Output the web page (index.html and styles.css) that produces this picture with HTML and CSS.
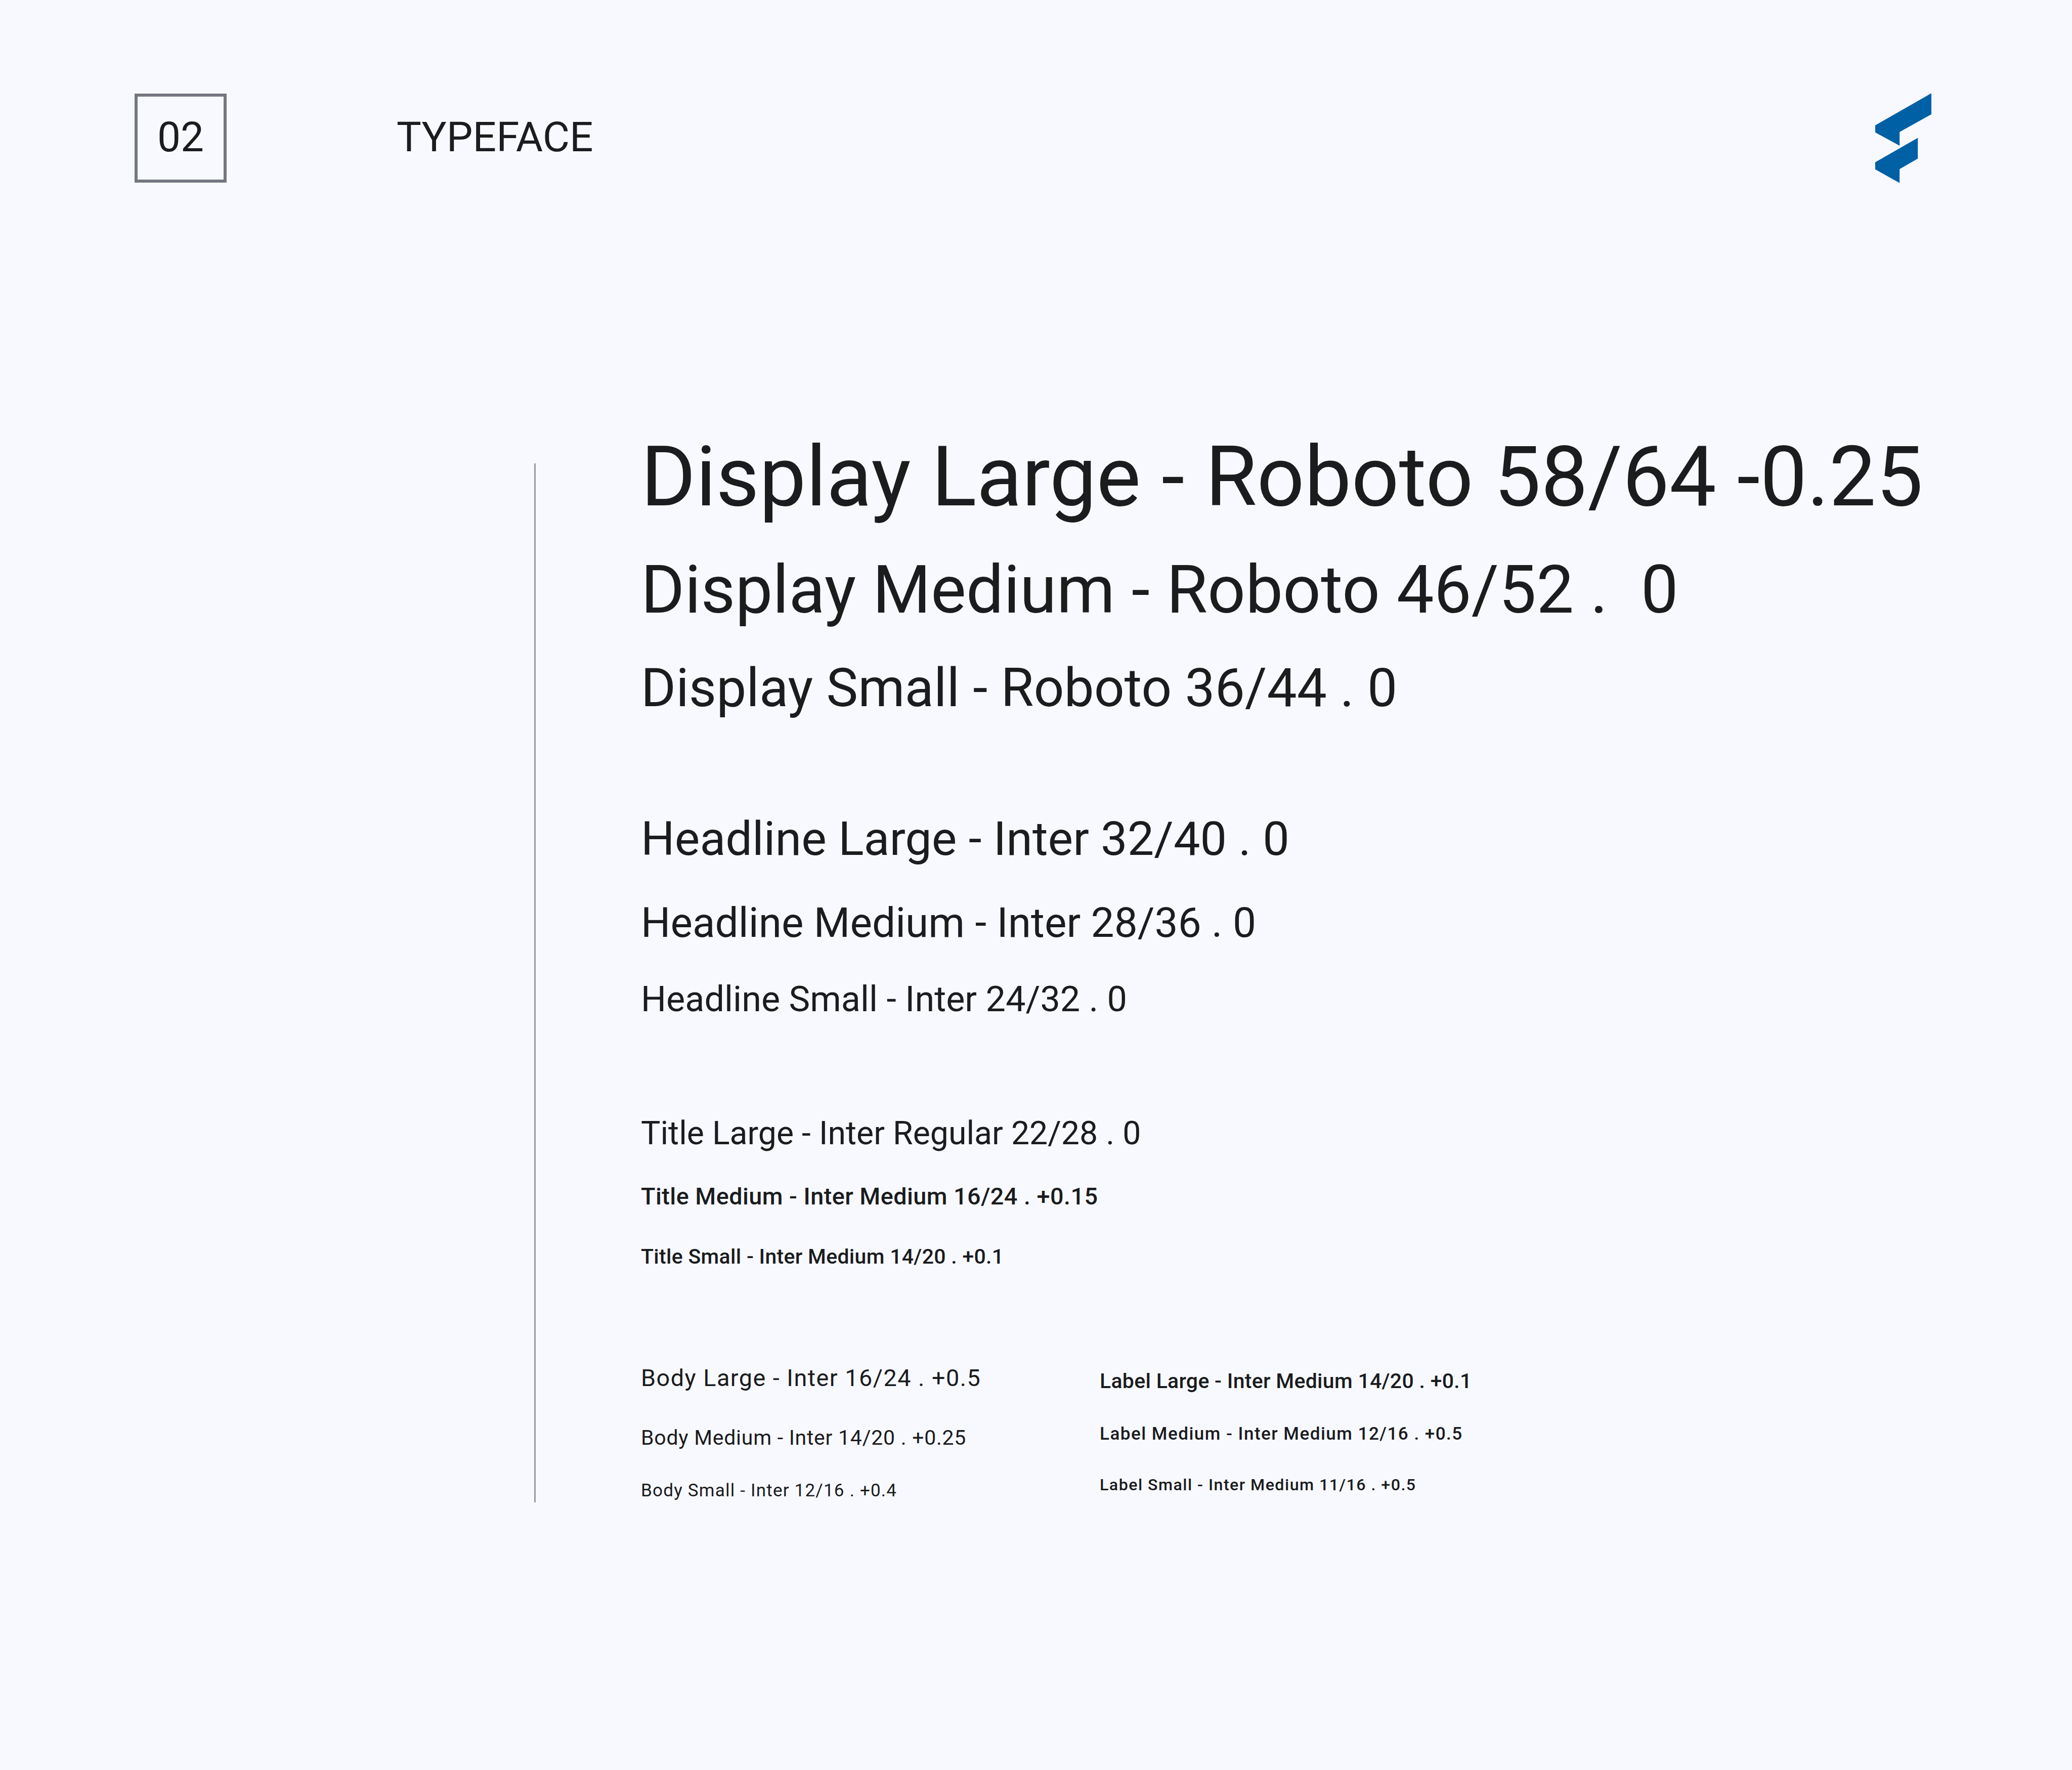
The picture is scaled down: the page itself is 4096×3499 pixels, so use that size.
FILE: index.html
```html
<!DOCTYPE html>
<html lang="en">
<head>
<meta charset="utf-8">
<title>Typeface</title>
<link rel="stylesheet" href="styles.css">
</head>
<body>
<div class="page">
  <header class="header">
    <div class="num">02</div>
    <div class="section">TYPEFACE</div>
    <svg class="logo" viewBox="204 96 456 729" aria-hidden="true">
      <polygon points="204,357 660,96 660,267 402,411 402,522 204,414"/>
      <polygon points="204,657 550,458 550,627 402,712 402,825 204,714"/>
    </svg>
  </header>
  <main class="main">
    <div class="rule"></div>
    <div class="samples">
      <div class="group g1">
        <p class="t dl">Display Large - Roboto 58/64 -0.25</p>
        <p class="t dm">Display Medium - Roboto 46/52 .&nbsp; 0</p>
        <p class="t ds">Display Small - Roboto 36/44 . 0</p>
      </div>
      <div class="group g2">
        <p class="t hl">Headline Large - Inter 32/40 . 0</p>
        <p class="t hm">Headline Medium - Inter 28/36 . 0</p>
        <p class="t hs">Headline Small - Inter 24/32 . 0</p>
      </div>
      <div class="group g3">
        <p class="t tl">Title Large - Inter Regular 22/28 . 0</p>
        <p class="t tm">Title Medium - Inter Medium 16/24 . +0.15</p>
        <p class="t ts">Title Small - Inter Medium 14/20 . +0.1</p>
      </div>
      <div class="cols">
        <div class="col body">
          <p class="t bl">Body Large - Inter 16/24 . +0.5</p>
          <p class="t bm">Body Medium - Inter 14/20 . +0.25</p>
          <p class="t bs">Body Small - Inter 12/16 . +0.4</p>
        </div>
        <div class="col label">
          <p class="t ll">Label Large - Inter Medium 14/20 . +0.1</p>
          <p class="t lm">Label Medium - Inter Medium 12/16 . +0.5</p>
          <p class="t lsm">Label Small - Inter Medium 11/16 . +0.5</p>
        </div>
      </div>
    </div>
  </main>
</div>
</body>
</html>
```

FILE: styles.css
```css
html, body {
  margin: 0;
  background: #f8f9ff;
}
body {
  font-family: Roboto, "Liberation Sans", sans-serif;
  color: #1a1c1e;
}
.page {
  width: 4096px;
  height: 3499px;
  padding: 184px 0 0 266px;
  box-sizing: border-box;
  overflow: hidden;
}
.header {
  display: flex;
  align-items: center;
  width: 3552px;
  height: 178px;
}
.num {
  width: 182px;
  height: 176px;
  box-sizing: border-box;
  border: 6px solid #74777f;
  padding-bottom: 4px;
  display: flex;
  align-items: center;
  justify-content: center;
  font-size: 82px;
}
.section {
  margin-left: 336px;
  padding-bottom: 4px;
  font-size: 82px;
  flex: 1;
}
.logo {
  width: 111px;
  height: 178px;
  fill: #0060a5;
}
.main {
  display: flex;
  margin-top: 554px;
  margin-left: 790px;
}
.rule {
  width: 3px;
  height: 2054px;
  background: #9a9ca2;
  margin-right: 208px;
}
.samples {
  margin-top: -64px;
}
.t {
  margin: 0;
  white-space: nowrap;
}
.dl { font-size: 165.2px; line-height: 182px; }
.dm { font-size: 131.7px; line-height: 148px; margin-top: 58px; }
.ds { font-size: 105.4px; line-height: 125px; margin-top: 58px; }
.g2 { margin-top: 178px; }
.hl { font-size: 93.6px; line-height: 114px; }
.hm { font-size: 82px; line-height: 102px; margin-top: 58px; }
.hs { font-size: 70.2px; line-height: 91px; margin-top: 55px; }
.g3 { margin-top: 179px; }
.tl { font-size: 64.4px; line-height: 80px; }
.tm { font-size: 46.8px; font-weight: 500; line-height: 68px; margin-top: 51px; letter-spacing: 0.44px; }
.ts { font-size: 41px; font-weight: 500; line-height: 57px; margin-top: 57px; letter-spacing: 0.29px; }
.cols {
  display: flex;
  margin-top: 177px;
}
.body { width: 907px; }
.bl { font-size: 46.8px; line-height: 68px; letter-spacing: 1.46px; }
.bm { font-size: 41px; line-height: 57px; margin-top: 56px; letter-spacing: 0.73px; }
.bs { font-size: 35.1px; line-height: 45px; margin-top: 53px; letter-spacing: 1.17px; }
.label { padding-top: 12px; }
.ll { font-size: 41px; font-weight: 500; line-height: 57px; letter-spacing: 0.29px; }
.lm { font-size: 35.1px; font-weight: 500; line-height: 45px; margin-top: 53px; letter-spacing: 1.46px; }
.lsm { font-size: 32.2px; font-weight: 500; line-height: 45px; margin-top: 56px; letter-spacing: 1.46px; }
```
